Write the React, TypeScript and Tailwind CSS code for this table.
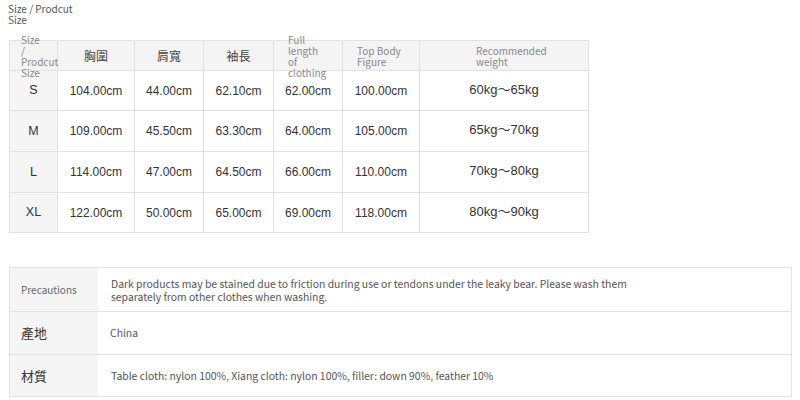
import React from "react";

type SizeRow = {
  size: string;
  values: string[];
  weight: string;
  height: string;
};

const sizeRows: SizeRow[] = [
  { size: "S", values: ["104.00cm", "44.00cm", "62.10cm", "62.00cm", "100.00cm"], weight: "60kg～65kg", height: "h-[40px]" },
  { size: "M", values: ["109.00cm", "45.50cm", "63.30cm", "64.00cm", "105.00cm"], weight: "65kg～70kg", height: "h-[41px]" },
  { size: "L", values: ["114.00cm", "47.00cm", "64.50cm", "66.00cm", "110.00cm"], weight: "70kg～80kg", height: "h-[41px]" },
  { size: "XL", values: ["122.00cm", "50.00cm", "65.00cm", "69.00cm", "118.00cm"], weight: "80kg～90kg", height: "h-[40px]" },
];

const colWidths = ["w-[48px]", "w-[77px]", "w-[69px]", "w-[70px]", "w-[69px]", "w-[77px]", "w-[169px]"];

const cjk = "font-['Noto_Sans_CJK_SC','Noto_Sans',sans-serif]";
const tc = "font-['Noto_Sans_CJK_TC',sans-serif]";
const num = "font-['Liberation_Sans','Noto_Sans_CJK_SC',sans-serif]";

// header label that keeps the row at 30px and lets long text spill over
function HeadLabel({ text, offset, width }: { text: string; offset: string; width: string }) {
  return (
    <div className="flex h-[29px] items-center">
      <div className={`${offset} ${width} shrink-0 text-left text-[10px] font-normal leading-[11px] text-[#888] ${cjk}`}>
        {text}
      </div>
    </div>
  );
}

export default function App() {
  return (
    <div className="h-[400px] w-[800px] overflow-hidden bg-white">
      <div className={`w-[75px] pl-[8px] pt-[3px] text-[10px] leading-[11px] text-[#555] ${cjk}`}>
        Size / Prodcut Size
      </div>

      <table className="ml-[9px] mt-[15px] table-fixed border-collapse">
        <colgroup>
          {colWidths.map((w, i) => (
            <col key={i} className={w} />
          ))}
        </colgroup>
        <thead>
          <tr className="h-[30px] bg-[#f4f4f4]">
            <th className="border border-[#e2e2e2] p-0">
              <HeadLabel text="Size / Prodcut Size" offset="ml-[11px]" width="w-[24px]" />
            </th>
            {["胸圍", "肩寬", "袖長"].map((t) => (
              <th key={t} className={`border border-[#e2e2e2] p-0 text-center text-[12px] font-normal text-[#444] ${tc}`}>
                <div className="flex h-[29px] items-center justify-center">{t}</div>
              </th>
            ))}
            <th className="border border-[#e2e2e2] p-0">
              <HeadLabel text="Full length of clothing" offset="ml-[14px]" width="w-[36px]" />
            </th>
            <th className="border border-[#e2e2e2] p-0">
              <HeadLabel text="Top Body Figure" offset="ml-[14px]" width="w-[52px]" />
            </th>
            <th className="border border-[#e2e2e2] p-0">
              <HeadLabel text="Recommended weight" offset="ml-[56px]" width="w-[80px]" />
            </th>
          </tr>
        </thead>
        <tbody>
          {sizeRows.map((row) => (
            <tr key={row.size} className={row.height}>
              <td className={`border border-[#e2e2e2] bg-[#f5f5f5] p-0 text-center text-[12.5px] text-[#333] ${num}`}>
                {row.size}
              </td>
              {row.values.map((v, i) => (
                <td key={i} className={`border border-[#e2e2e2] p-0 text-center text-[12px] text-[#333] ${num}`}>
                  {v}
                </td>
              ))}
              <td className={`border border-[#e2e2e2] p-0 pb-[2px] text-center text-[13px] text-[#333] ${num}`}>
                {row.weight}
              </td>
            </tr>
          ))}
        </tbody>
      </table>

      <div className={`ml-[9px] mt-[34px] w-[783px] border border-[#e2e2e2] ${cjk}`}>
        <div className="flex h-[43px]">
          <div className="flex w-[88px] shrink-0 items-center bg-[#f5f5f5] pl-[11px] text-[10px] text-[#666]">
            Precautions
          </div>
          <div className="flex flex-1 items-center pl-[13px]">
            <p className="w-[540px] text-[10.4px] leading-[13px] text-[#555]">
              Dark products may be stained due to friction during use or tendons under the leaky bear. Please wash them separately from other clothes when washing.
            </p>
          </div>
        </div>
        <div className="flex h-[43px] border-t border-[#e2e2e2]">
          <div className={`flex w-[88px] shrink-0 items-center bg-[#f5f5f5] pl-[11px] text-[13px] text-[#333] ${tc}`}>
            產地
          </div>
          <div className="flex flex-1 items-center pl-[12px] text-[10.4px] text-[#555]">China</div>
        </div>
        <div className="flex h-[42px] border-t border-[#e2e2e2]">
          <div className={`flex w-[88px] shrink-0 items-center bg-[#f5f5f5] pl-[11px] text-[13px] text-[#333] ${tc}`}>
            材質
          </div>
          <div className="flex flex-1 items-center pl-[13px] text-[10.4px] text-[#555]">
            Table cloth: nylon 100%, Xiang cloth: nylon 100%, filler: down 90%, feather 10%
          </div>
        </div>
      </div>
    </div>
  );
}
